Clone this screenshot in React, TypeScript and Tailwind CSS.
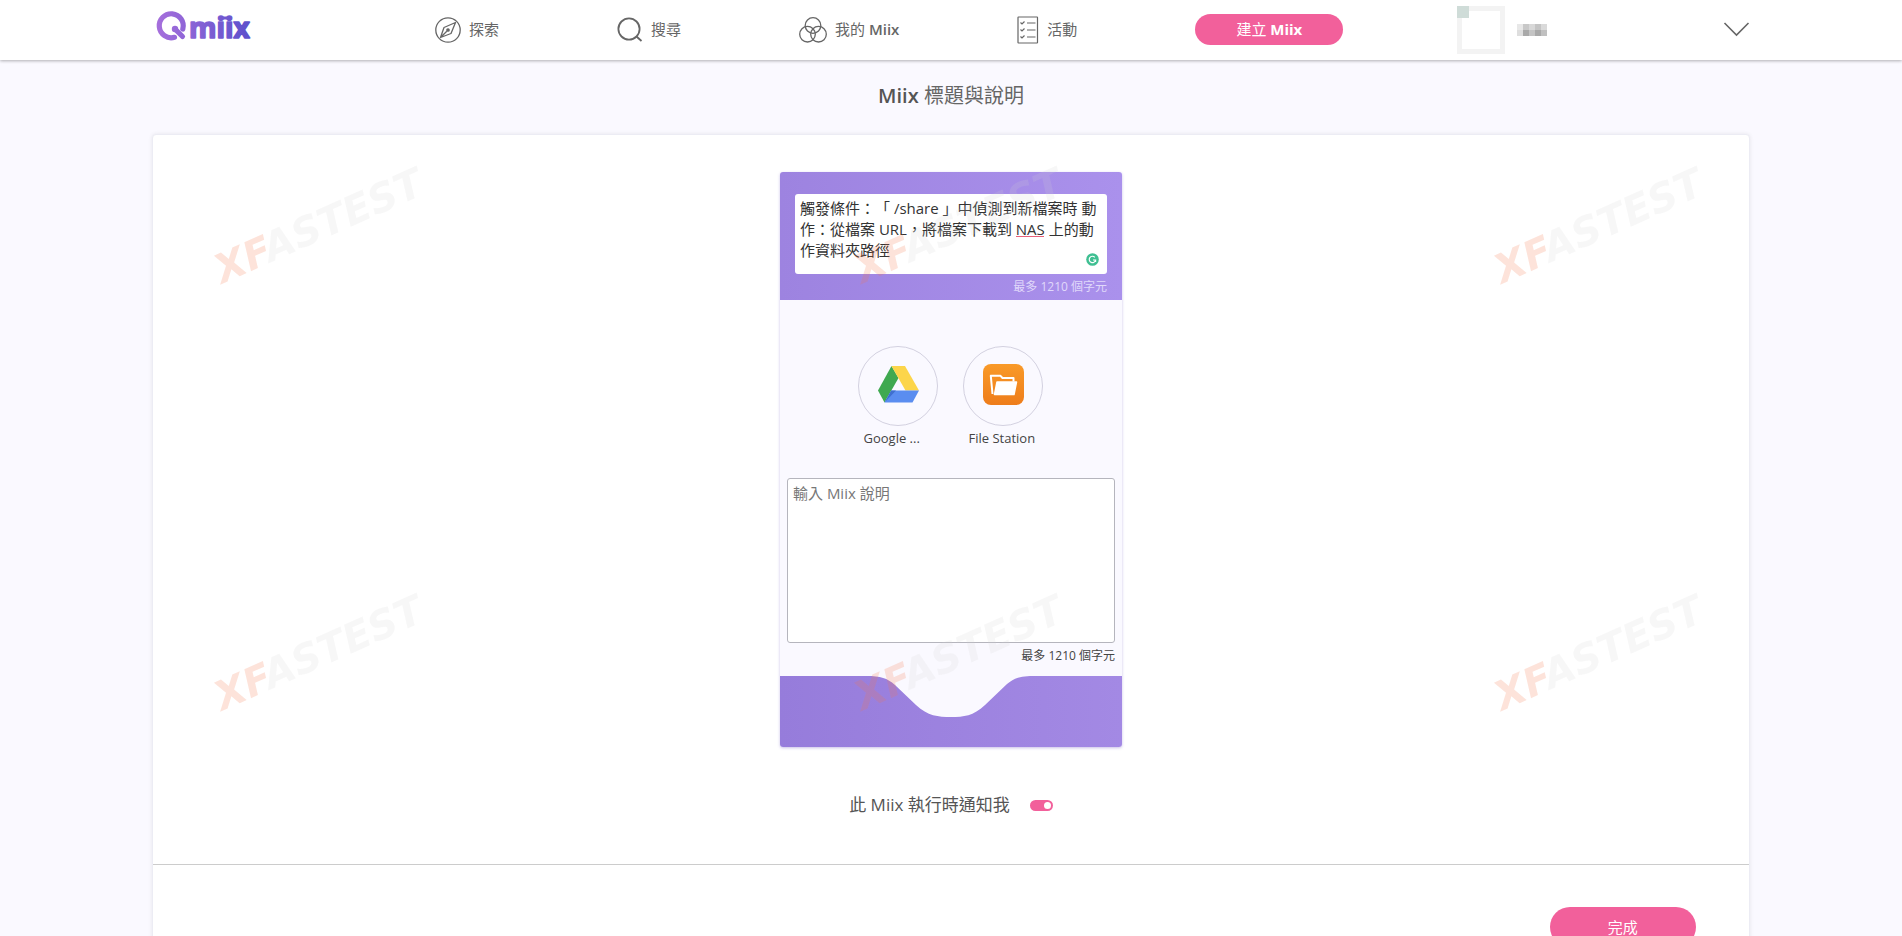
import { useState } from 'react'
import type { ReactNode } from 'react'

const MAX_LENGTH = 1210

const DEFAULT_TITLE =
  '觸發條件：「 /share 」中偵測到新檔案時 動作：從檔案 URL，將檔案下載到 NAS 上的動作資料夾路徑'

function Logo() {
  return (
    <svg width="104" height="40" viewBox="0 0 104 40" className="overflow-visible" aria-label="Qmiix" role="img">
      <defs>
        <linearGradient id="logo" x1="0" y1="0" x2="98" y2="0" gradientUnits="userSpaceOnUse">
          <stop offset="0" stopColor="#a66fdc" />
          <stop offset="1" stopColor="#5a4fcb" />
        </linearGradient>
      </defs>
      <path
        d="M18.500 29.300A12 12 0 1 1 26.800 21M19.500 21.500L26.500 28.500"
        fill="none"
        stroke="url(#logo)"
        strokeWidth="5.200"
        strokeLinecap="round"
      />
      <circle cx="19" cy="21" r="3.200" fill="url(#logo)" />
      <text
        x="33"
        y="30"
        fontSize="28"
        fontWeight="700"
        fill="url(#logo)"
        stroke="url(#logo)"
        strokeWidth="1.600"
        strokeLinejoin="round"
        className="font-['Open_Sans',sans-serif]"
      >
        miix
      </text>
      <path d="M64 10H73" stroke="url(#logo)" strokeWidth="3" />
    </svg>
  )
}

function CompassIcon() {
  return (
    <svg width="26" height="26" viewBox="0 0 26 26" fill="none" stroke="#666" strokeWidth="1.300">
      <circle cx="13" cy="13" r="12.200" />
      <path d="M20.500 5.500L9 10.500L5.500 20.500L16 16.500ZM5.500 20.500L11.800 14.200" strokeLinejoin="round" />
      <circle cx="13" cy="13" r="1.200" fill="#666" />
    </svg>
  )
}

function SearchIcon() {
  return (
    <svg width="26" height="26" viewBox="0 0 26 26" fill="none" stroke="#666" strokeWidth="1.800">
      <circle cx="12" cy="12" r="10.600" />
      <path d="M19.500 19.500L24.500 24" />
    </svg>
  )
}

function CirclesIcon() {
  return (
    <svg width="28" height="26" viewBox="0 0 28 26" fill="none" stroke="#666" strokeWidth="1.300">
      <circle cx="14" cy="8.500" r="7.800" />
      <circle cx="8.500" cy="17.200" r="7.800" />
      <circle cx="19.500" cy="17.200" r="7.800" />
    </svg>
  )
}

function ChecklistIcon() {
  return (
    <svg width="22" height="28" viewBox="0 0 22 28" fill="none" stroke="#666" strokeWidth="1.200">
      <rect x="1" y="1" width="19.500" height="26" rx="0.500" />
      <path d="M3.500 6.500L5 8L7.500 5.500M3.500 13.500L5 15L7.500 12.500M3.500 20.500L5 22L7.500 19.500" />
      <path d="M10 7H18.500M10 14H18.500M10 21H18.500" />
    </svg>
  )
}

function DriveIcon() {
  return (
    <svg width="41" height="37" viewBox="0 0 41 37">
      <path d="M13.500 0L0 24.500L6.500 36.500L20.500 12Z" fill="#3fa950" />
      <path d="M13.500 0H27L41 24.500H27.500Z" fill="#fcd54a" />
      <path d="M13.200 24.500H41L34.500 36.500H6.500Z" fill="#5a8df0" />
      <path d="M13.200 24.500H18L6.500 36.500Z" fill="#3f6fd0" />
    </svg>
  )
}

function FolderIcon() {
  return (
    <svg width="41" height="41" viewBox="0 0 41 41">
      <defs>
        <linearGradient id="folder" x1="0" y1="0" x2="0" y2="1">
          <stop offset="0" stopColor="#f99a28" />
          <stop offset="1" stopColor="#ee7d1b" />
        </linearGradient>
      </defs>
      <rect width="41" height="41" rx="8" fill="url(#folder)" />
      <path
        d="M9.500 30L7.800 11.800H17.500L19.500 14H30.500V17.500"
        fill="none"
        stroke="#fff"
        strokeWidth="2"
        strokeLinejoin="round"
      />
      <path d="M14 18H33.500L31 30.500H11.500Z" fill="#fff" stroke="#fff" strokeWidth="1.500" strokeLinejoin="round" />
    </svg>
  )
}

function Avatar() {
  return (
    <div className="-ml-1 flex items-center gap-3">
      <div className="relative h-12 w-12 border-[5px] border-[#f3f3f3]">
        <span className="absolute -top-[5px] -left-[5px] h-3 w-3 bg-[#cfdcd8]" />
      </div>
      <div className="grid w-[30px] grid-cols-5">
        {['#e8e8e8', '#c8c8c8', '#d8d8d8', '#c4c4c4', '#dadada', '#dedede', '#a9a9a9', '#c4c4c4', '#a9a9a9', '#c0c0c0'].map(
          (color, i) => (
            <span key={i} className="h-[6px]" style={{ backgroundColor: color }} />
          ),
        )}
      </div>
    </div>
  )
}

function NavItem({ icon, children }: { icon: ReactNode; children: ReactNode }) {
  return (
    <a href="#" className="flex items-center gap-2 text-[15px] whitespace-nowrap text-[#666]">
      {icon}
      <span>{children}</span>
    </a>
  )
}

function Service({ icon, name }: { icon: ReactNode; name: string }) {
  return (
    <div className="w-20">
      <div className="flex h-20 w-20 items-center justify-center rounded-full border border-[#d3d1e0] pb-[3px]">{icon}</div>
      <p className="mt-1 px-[5px] text-[13px] leading-4 whitespace-nowrap text-[#444]">{name}</p>
    </div>
  )
}

function Watermark() {
  return (
    <svg className="pointer-events-none absolute inset-0 h-full w-full" aria-hidden="true">
      <defs>
        <pattern id="watermark" width="640" height="427" patternUnits="userSpaceOnUse">
          <text
            transform="translate(222 284) rotate(-24)"
            fontSize="40"
            fontWeight="700"
            fontStyle="italic"
            className="font-['DejaVu_Sans',sans-serif]"
          >
            <tspan fill="#f57346" fillOpacity="0.200">XF</tspan>
            <tspan fill="#d0d0d0" fillOpacity="0.170">ASTEST</tspan>
          </text>
        </pattern>
      </defs>
      <rect width="100%" height="100%" fill="url(#watermark)" />
    </svg>
  )
}

export default function App() {
  const [title, setTitle] = useState(DEFAULT_TITLE)
  const [description, setDescription] = useState('')
  const [notify, setNotify] = useState(true)

  return (
    <div className="relative h-screen overflow-hidden bg-[#faf9ff] font-['Open_Sans','Noto_Sans_CJK_TC',sans-serif] text-[#555]">
      <header className="relative h-[60px] bg-white shadow-[0_1px_3px_rgba(0,0,0,0.3)]">
        <div className="mx-auto flex h-[59px] w-[84%] items-center">
          <a href="#" className="w-[17.7%] pb-1 pl-1">
            <Logo />
          </a>
          <nav className="flex items-center gap-[118px]">
            <NavItem icon={<CompassIcon />}>探索</NavItem>
            <NavItem icon={<SearchIcon />}>搜尋</NavItem>
            <NavItem icon={<CirclesIcon />}>
              我的 <span className="font-semibold">Miix</span>
            </NavItem>
            <NavItem icon={<ChecklistIcon />}>活動</NavItem>
            <button className="h-[31px] w-[148px] rounded-full bg-[#f2609b] text-[15px] font-bold text-white">
              <span className="font-normal">建立</span> Miix
            </button>
            <Avatar />
          </nav>
          <button className="ml-auto" aria-label="Menu">
            <svg width="27" height="15" viewBox="0 0 27 15" fill="none" stroke="#666" strokeWidth="1.600">
              <path d="M1.500 1L13.500 13L25.500 1" />
            </svg>
          </button>
        </div>
      </header>

      <main className="mx-auto w-[84%]">
        <h1 className="pt-[21px] text-center text-[20px] leading-[30px]">
          <span className="font-semibold">Miix</span> <span className="text-[#666]">標題與說明</span>
        </h1>

        <div className="mt-[23px] rounded-sm border border-[#ececf4] bg-white shadow-[0_0_4px_rgba(0,0,0,0.08)]">
          <section className="flex flex-col items-center border-b border-[#ccc] pt-[37px] pb-[47px]">
            <div className="w-[342px] overflow-hidden rounded-[3px] bg-[#faf9ff] shadow-[0_1px_3px_rgba(120,100,200,0.4)]">
              <div className="h-32 bg-linear-to-r from-[#9d83e0] to-[#aa91ec] px-[15px] pt-[22px]">
                <div className="relative h-20 rounded-[3px] bg-white">
                  <textarea
                    aria-label="Miix 標題"
                    maxLength={MAX_LENGTH}
                    value={title}
                    onChange={(e) => setTitle(e.target.value)}
                    className="block h-full w-full resize-none overflow-hidden bg-transparent px-[5px] py-1 text-[15px] leading-[21px] text-[#333] outline-none [text-spacing-trim:space-all]"
                  />
                  {/* spell-check line under "NAS" */}
                  {title === DEFAULT_TITLE && (
                    <span className="absolute top-[42px] left-[221px] h-px w-7 bg-[#e8607a]" />
                  )}
                  <svg className="absolute right-2 bottom-2" width="13" height="13" viewBox="0 0 13 13">
                    <circle cx="6.500" cy="6.500" r="6.300" fill="#3fbf92" />
                    <path d="M8.800 4.300A3.200 3.200 0 1 0 9.600 7H7M9.600 7V9" fill="none" stroke="#fff" strokeWidth="1.200" />
                  </svg>
                </div>
                <p className="mt-1 text-right text-[12px] leading-[18px] text-[#e0d8fa]">最多 {MAX_LENGTH} 個字元</p>
              </div>

              <div className="flex justify-center gap-[25px] pt-[46px] pb-8">
                <Service icon={<DriveIcon />} name="Google ..." />
                <Service icon={<FolderIcon />} name="File Station" />
              </div>

              <div className="px-[7px]">
                <textarea
                  aria-label="Miix 說明"
                  placeholder="輸入 Miix 說明"
                  maxLength={MAX_LENGTH}
                  value={description}
                  onChange={(e) => setDescription(e.target.value)}
                  className="block h-[165px] w-full resize-none rounded-[3px] border border-[#b5b5bd] bg-white px-[5px] py-1 text-[15px] leading-[21px] outline-none placeholder:text-[#777]"
                />
                <p className="mt-1 text-right text-[12px] leading-[18px] text-[#444]">最多 {MAX_LENGTH} 個字元</p>
              </div>

              <svg className="mt-[11px] block w-full" viewBox="0 0 342 71">
                <defs>
                  <linearGradient id="wave" x1="0" y1="0" x2="1" y2="0">
                    <stop offset="0" stopColor="#967cdb" />
                    <stop offset="1" stopColor="#a389e4" />
                  </linearGradient>
                </defs>
                <path
                  d="M0 0H86C101 0 107 2 115 9L136 29C148 40 158 41 171 41C184 41 193 40 205 29L227 8C235 1 242 0 256 0H342V71H0Z"
                  fill="url(#wave)"
                />
              </svg>
            </div>

            <label className="mt-[46px] flex items-center gap-5 text-[17px] leading-6">
              此 Miix 執行時通知我
              <input
                type="checkbox"
                checked={notify}
                onChange={(e) => setNotify(e.target.checked)}
                className="h-[11px] w-[23px] appearance-none rounded-full bg-[#bbb] p-[2px] before:block before:h-[7px] before:w-[7px] before:rounded-full before:bg-white checked:bg-[#f2609b] checked:before:ml-auto"
              />
            </label>
          </section>

          <div className="flex justify-end px-[53px] pt-[42px] pb-10">
            <button className="h-10 w-[146px] rounded-full bg-[#f2609b] text-[15px] text-white">完成</button>
          </div>
        </div>
      </main>

      <Watermark />
    </div>
  )
}
